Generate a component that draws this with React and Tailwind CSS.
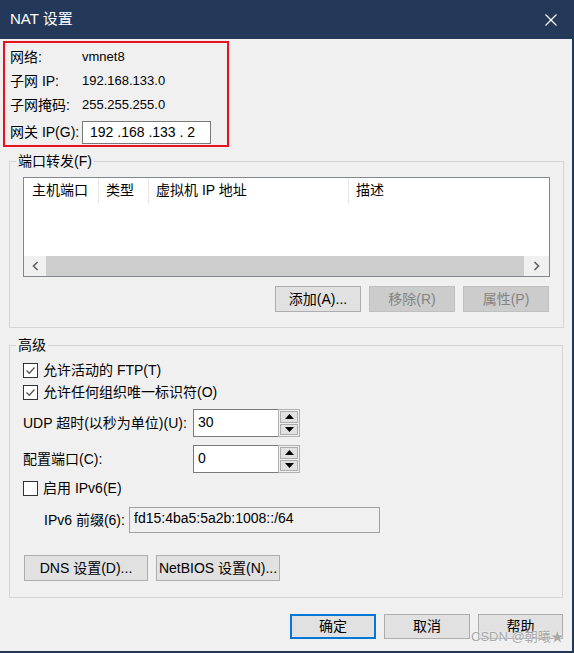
import React from 'react';

const Check = ({ checked }) => (
  <span className="w-[15px] h-[15px] border border-[#333333] bg-white flex items-center justify-center shrink-0">
    {checked && (
      <svg width="11" height="11" viewBox="0 0 11 11">
        <path d="M1.5 5.5 L4.3 8.3 L9.5 2.5" fill="none" stroke="#555555" strokeWidth="1.3" />
      </svg>
    )}
  </span>
);

const Arrow = ({ up }) => (
  <svg width="9" height="5" viewBox="0 0 9 5">
    <path d={up ? 'M4.5 0 L9 5 L0 5 Z' : 'M0 0 L9 0 L4.5 5 Z'} fill="#000000" />
  </svg>
);

const SpinBox = ({ value }) => (
  <div className="flex h-[28px]">
    <div className="w-[85px] bg-white border border-r-0 border-[#7a7a7a] pl-[4px] pt-[2px] leading-[20px]">{value}</div>
    <div className="w-[22px] border border-[#b0b0b0] p-[1px] flex flex-col gap-[1px]">
      <div className="flex-1 border border-[#adadad] bg-[#e1e1e1] flex items-center justify-center">
        <Arrow up />
      </div>
      <div className="flex-1 border border-[#adadad] bg-[#e1e1e1] flex items-center justify-center">
        <Arrow />
      </div>
    </div>
  </div>
);

const Btn = ({ children, disabled, primary, className = '' }) => (
  <div
    className={
      'flex items-center justify-center ' +
      (primary
        ? 'border-2 border-[#0078d7] bg-[#e1e1e1] text-black '
        : disabled
        ? 'border border-[#bfbfbf] bg-[#cccccc] text-[#838383] '
        : 'border border-[#adadad] bg-[#e1e1e1] text-black ') +
      className
    }
  >
    {children}
  </div>
);

export default function App() {
  return (
    <div className="relative w-[574px] h-[653px] overflow-hidden bg-[#f0f0f0] border-r-2 border-b-2 border-[#243859] text-[14px] text-black font-[family-name:'Liberation_Sans','Noto_Sans_CJK_SC',sans-serif]">
      {/* title bar */}
      <div className="h-[39px] bg-[#243859] flex items-center justify-between pl-[10px] pr-[15px]">
        <span className="text-white text-[15px]">NAT 设置</span>
        <svg width="12" height="12" viewBox="0 0 12 12">
          <path d="M0.5 0.5 L11.5 11.5 M11.5 0.5 L0.5 11.5" stroke="#ffffff" strokeWidth="1.2" />
        </svg>
      </div>

      {/* network info */}
      <div className="mt-[2px] ml-[3px] w-[226px] h-[106px] border-2 border-[#e81123] pl-[5px] pt-[2px]">
        <div className="h-[24px] flex items-center">
          <span className="w-[72px]">网络:</span>
          <span className="text-[13px]">vmnet8</span>
        </div>
        <div className="h-[24px] flex items-center">
          <span className="w-[72px]">子网 IP:</span>
          <span className="text-[13px]">192.168.133.0</span>
        </div>
        <div className="h-[24px] flex items-center">
          <span className="w-[72px]">子网掩码:</span>
          <span className="text-[13px]">255.255.255.0</span>
        </div>
        <div className="mt-[4px] h-[23px] flex items-center">
          <span className="w-[72px]">网关 IP(G):</span>
          <div className="w-[129px] h-[23px] border border-[#7a7a7a] bg-white pl-[7px] leading-[21px] whitespace-pre">192 .168 .133 . 2</div>
        </div>
      </div>

      {/* port forwarding */}
      <fieldset className="mt-[4px] ml-[9px] w-[555px] border border-[#d5d5d5] px-[13px] pb-[15px]">
        <legend className="-ml-[7px] px-[2px] leading-[20px]">端口转发(F)</legend>
        <div className="mt-[6px] w-[527px] h-[100px] border border-[#828790] bg-white flex flex-col">
          <div className="h-[25px] flex">
            <div className="w-[75px] border-r border-[#e5e5e5] pl-[8px] leading-[25px]">主机端口</div>
            <div className="w-[50px] border-r border-[#e5e5e5] pl-[7px] leading-[25px]">类型</div>
            <div className="w-[200px] border-r border-[#e5e5e5] pl-[7px] leading-[25px]">虚拟机 IP 地址</div>
            <div className="flex-1 pl-[7px] leading-[25px]">描述</div>
          </div>
          <div className="flex-1" />
          <div className="h-[20px] flex bg-[#f0f0f0]">
            <div className="w-[22px] flex items-center justify-center">
              <svg width="7" height="10" viewBox="0 0 7 10">
                <path d="M5.5 1 L1.5 5 L5.5 9" fill="none" stroke="#606060" strokeWidth="1.6" />
              </svg>
            </div>
            <div className="flex-1 bg-[#cdcdcd]" />
            <div className="w-[25px] flex items-center justify-center">
              <svg width="7" height="10" viewBox="0 0 7 10">
                <path d="M1.5 1 L5.5 5 L1.5 9" fill="none" stroke="#606060" strokeWidth="1.6" />
              </svg>
            </div>
          </div>
        </div>
        <div className="mt-[9px] pr-[1px] flex justify-end gap-[8px]">
          <Btn className="w-[86px] h-[26px]">添加(A)...</Btn>
          <Btn disabled className="w-[86px] h-[26px]">移除(R)</Btn>
          <Btn disabled className="w-[86px] h-[26px]">属性(P)</Btn>
        </div>
      </fieldset>

      {/* advanced */}
      <fieldset className="mt-[7px] ml-[9px] w-[554px] border border-[#d5d5d5] px-[13px] pb-[16px]">
        <legend className="-ml-[7px] px-[2px] leading-[20px]">高级</legend>
        <div className="mt-[4px] h-[22px] flex items-center gap-[5px]">
          <Check checked />
          <span>允许活动的 FTP(T)</span>
        </div>
        <div className="h-[22px] flex items-center gap-[5px]">
          <Check checked />
          <span>允许任何组织唯一标识符(O)</span>
        </div>
        <div className="mt-[6px] flex items-center">
          <span className="w-[170px]">UDP 超时(以秒为单位)(U):</span>
          <SpinBox value="30" />
        </div>
        <div className="mt-[8px] flex items-center">
          <span className="w-[170px]">配置端口(C):</span>
          <SpinBox value="0" />
        </div>
        <div className="mt-[4px] h-[22px] flex items-center gap-[5px]">
          <Check />
          <span>启用 IPv6(E)</span>
        </div>
        <div className="mt-[8px] pl-[21px] flex items-center">
          <span className="w-[85px]">IPv6 前缀(6):</span>
          <div className="w-[251px] h-[26px] border border-[#a0a0a0] bg-[#f0f0f0] pl-[4px] leading-[20px]">fd15:4ba5:5a2b:1008::/64</div>
        </div>
        <div className="mt-[22px] ml-[1px] flex gap-[8px]">
          <Btn className="w-[124px] h-[26px]">DNS 设置(D)...</Btn>
          <Btn className="w-[124px] h-[26px]">NetBIOS 设置(N)...</Btn>
        </div>
      </fieldset>

      {/* dialog buttons */}
      <div className="mt-[16px] pr-[9px] flex justify-end gap-[8px]">
        <Btn primary className="w-[86px] h-[25px]">确定</Btn>
        <Btn className="w-[86px] h-[25px]">取消</Btn>
        <Btn className="w-[85px] h-[25px]">帮助</Btn>
      </div>

      <div className="absolute left-[471px] top-[627px] text-[13px] text-[#a8a8a8] [text-shadow:0_0_2px_#ffffff]">CSDN @朝曦★</div>
    </div>
  );
}
